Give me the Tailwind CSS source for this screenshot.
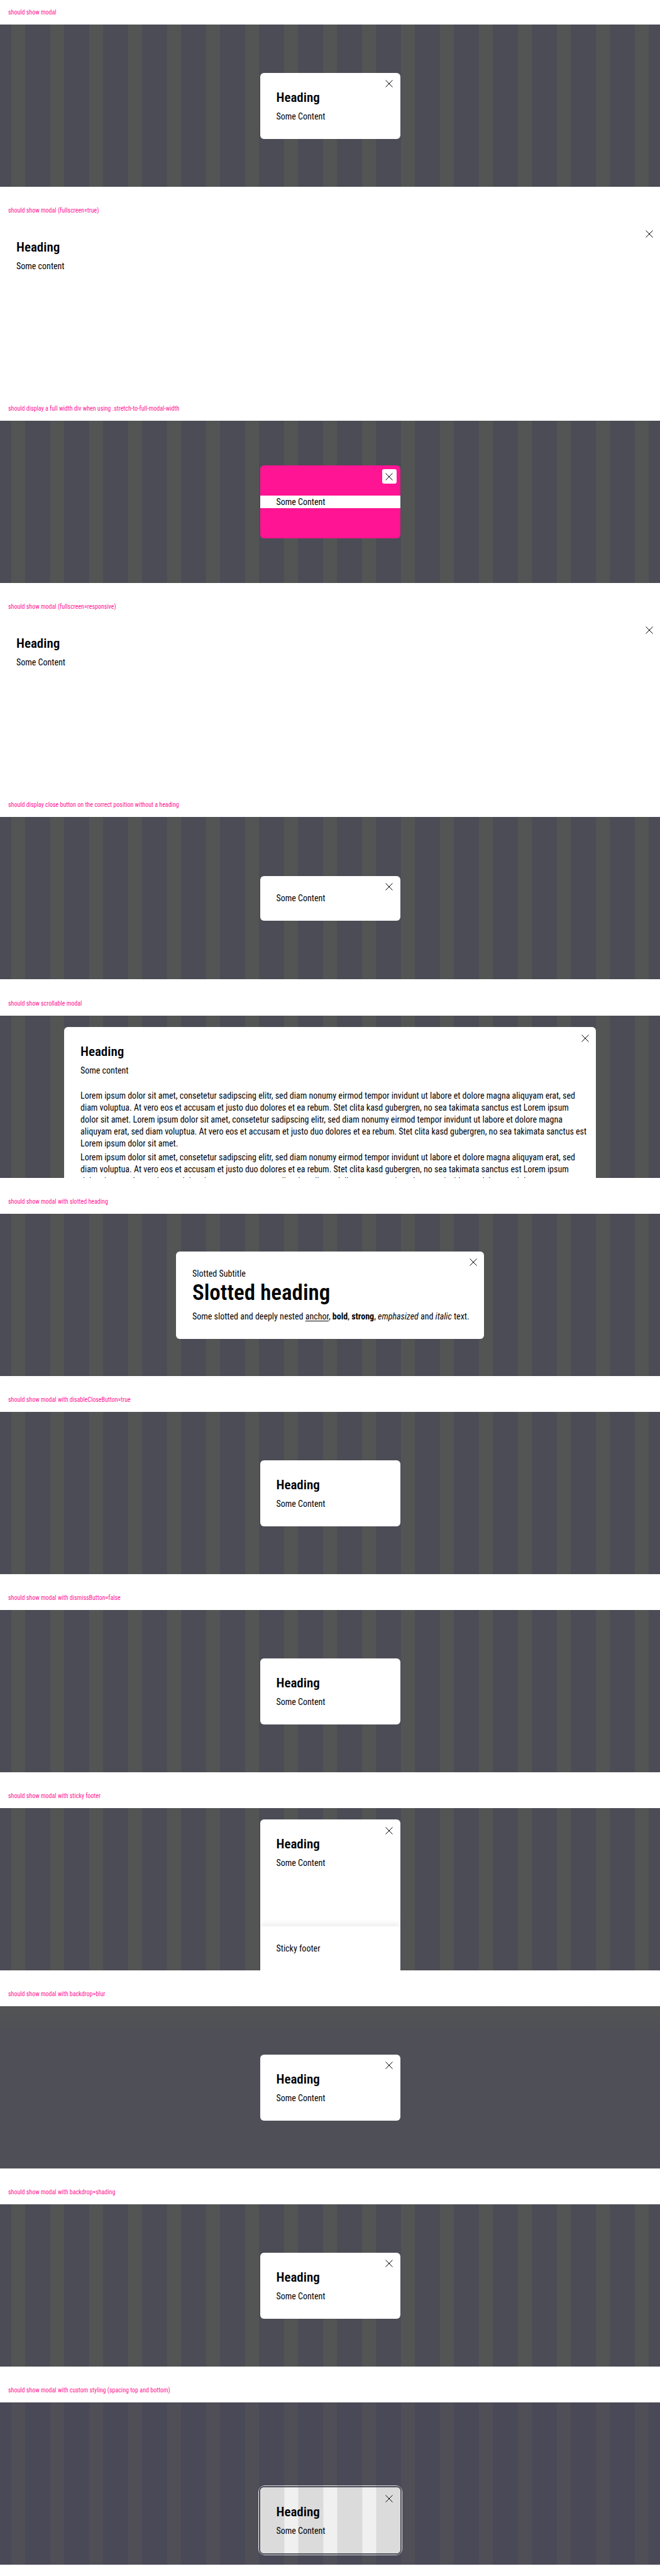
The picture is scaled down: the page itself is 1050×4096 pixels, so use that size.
<!DOCTYPE html>
<html lang="en">
<head>
<meta charset="utf-8">
<meta name="viewport" content="width=device-width, initial-scale=1">
<title>Modal overview</title>
<script src="https://cdn.jsdelivr.net/npm/@tailwindcss/browser@4"></script>
</head>
<body class="bg-white text-sm leading-[19px] text-[#010205] font-['Roboto_Condensed',Roboto,sans-serif]">
<svg class="hidden" aria-hidden="true">
  <symbol id="close" viewBox="0 0 12 12"><path d="M.5.5l11 11M11.5.5l-11 11" fill="none" stroke="currentColor" stroke-width="1"/></symbol>
</svg>

<main>
<section class="pb-[18px]">
  <h2 class="px-[13px] text-[10px] leading-[39px] text-[#ff1493]">should show modal</h2>
  <div class="flex h-[258px] items-center justify-center bg-[linear-gradient(90deg,#4c4c56_20px,#535554_20px,#535554_42px,#4c4c56_42px)] bg-size-[62px_100%] bg-center">
    <div role="dialog" class="relative w-[223px] rounded-md bg-white p-[26px]">
      <button type="button" aria-label="Dismiss modal" class="absolute top-1.5 right-1.5 grid size-[23px] place-items-center rounded-[3px] bg-white"><svg class="size-3"><use href="#close"/></svg></button>
      <h3 class="text-[21px] leading-[26px] font-semibold">Heading</h3>
      <p class="mt-2">Some Content</p>
    </div>
  </div>
</section>

<section class="pb-[18px]">
  <h2 class="px-[13px] text-[10px] leading-[39px] text-[#ff1493]">should show modal (fullscreen=true)</h2>
  <div role="dialog" class="relative h-[258px] bg-white p-[26px]">
    <button type="button" aria-label="Dismiss modal" class="absolute top-1.5 right-1.5 grid size-[23px] place-items-center rounded-[3px] bg-white"><svg class="size-3"><use href="#close"/></svg></button>
    <h3 class="text-[21px] leading-[26px] font-semibold">Heading</h3>
    <p class="mt-2">Some content</p>
  </div>
</section>

<section class="pb-[18px]">
  <h2 class="px-[13px] text-[10px] leading-[39px] text-[#ff1493]">should display a full width div when using .stretch-to-full-modal-width</h2>
  <div class="flex h-[258px] items-center justify-center bg-[linear-gradient(90deg,#4c4c56_20px,#535554_20px,#535554_42px,#4c4c56_42px)] bg-size-[62px_100%] bg-center">
    <div role="dialog" class="relative w-[223px] rounded-md bg-[#ff1493] py-12">
      <button type="button" aria-label="Dismiss modal" class="absolute top-1.5 right-1.5 grid size-[23px] place-items-center rounded-[3px] bg-white"><svg class="size-3"><use href="#close"/></svg></button>
      <p class="bg-white px-[26px] leading-5">Some Content</p>
    </div>
  </div>
</section>

<section class="pb-[18px]">
  <h2 class="px-[13px] text-[10px] leading-[39px] text-[#ff1493]">should show modal (fullscreen=responsive)</h2>
  <div role="dialog" class="relative h-[258px] bg-white p-[26px]">
    <button type="button" aria-label="Dismiss modal" class="absolute top-1.5 right-1.5 grid size-[23px] place-items-center rounded-[3px] bg-white"><svg class="size-3"><use href="#close"/></svg></button>
    <h3 class="text-[21px] leading-[26px] font-semibold">Heading</h3>
    <p class="mt-2">Some Content</p>
  </div>
</section>

<section class="pb-[19px]">
  <h2 class="px-[13px] text-[10px] leading-[39px] text-[#ff1493]">should display close button on the correct position without a heading</h2>
  <div class="flex h-[258px] items-center justify-center bg-[linear-gradient(90deg,#4c4c56_20px,#535554_20px,#535554_42px,#4c4c56_42px)] bg-size-[62px_100%] bg-center">
    <div role="dialog" class="relative w-[223px] rounded-md bg-white p-[26px]">
      <button type="button" aria-label="Dismiss modal" class="absolute top-1.5 right-1.5 grid size-[23px] place-items-center rounded-[3px] bg-white"><svg class="size-3"><use href="#close"/></svg></button>
      <p>Some Content</p>
    </div>
  </div>
</section>

<section class="pb-[18px]">
  <h2 class="px-[13px] text-[10px] leading-[39px] text-[#ff1493]">should show scrollable modal</h2>
  <div class="h-[258px] overflow-hidden bg-[linear-gradient(90deg,#4c4c56_20px,#535554_20px,#535554_42px,#4c4c56_42px)] bg-size-[62px_100%] bg-center px-[102px] pt-[18px]">
    <div role="dialog" class="relative rounded-t-md bg-white p-[26px]">
      <button type="button" aria-label="Dismiss modal" class="absolute top-1.5 right-1.5 grid size-[23px] place-items-center rounded-[3px] bg-white"><svg class="size-3"><use href="#close"/></svg></button>
      <h3 class="text-[21px] leading-[26px] font-semibold">Heading</h3>
      <p class="mt-2">Some content</p>
      <p class="mt-[21px] whitespace-nowrap">Lorem ipsum dolor sit amet, consetetur sadipscing elitr, sed diam nonumy eirmod tempor invidunt ut labore et dolore magna aliquyam erat, sed<br>
      diam voluptua. At vero eos et accusam et justo duo dolores et ea rebum. Stet clita kasd gubergren, no sea takimata sanctus est Lorem ipsum<br>
      dolor sit amet. Lorem ipsum dolor sit amet, consetetur sadipscing elitr, sed diam nonumy eirmod tempor invidunt ut labore et dolore magna<br>
      aliquyam erat, sed diam voluptua. At vero eos et accusam et justo duo dolores et ea rebum. Stet clita kasd gubergren, no sea takimata sanctus est<br>
      Lorem ipsum dolor sit amet.</p>
      <p class="mt-[3px] whitespace-nowrap">Lorem ipsum dolor sit amet, consetetur sadipscing elitr, sed diam nonumy eirmod tempor invidunt ut labore et dolore magna aliquyam erat, sed<br>
      diam voluptua. At vero eos et accusam et justo duo dolores et ea rebum. Stet clita kasd gubergren, no sea takimata sanctus est Lorem ipsum<br>
      dolor sit amet. Lorem ipsum dolor sit amet, consetetur sadipscing elitr, sed diam nonumy eirmod tempor invidunt ut labore et dolore magna</p>
    </div>
  </div>
</section>

<section class="pb-[18px]">
  <h2 class="px-[13px] text-[10px] leading-[39px] text-[#ff1493]">should show modal with slotted heading</h2>
  <div class="flex h-[258px] items-center justify-center bg-[linear-gradient(90deg,#4c4c56_20px,#535554_20px,#535554_42px,#4c4c56_42px)] bg-size-[62px_100%] bg-center">
    <div role="dialog" class="relative w-[490px] rounded-md bg-white p-[26px]">
      <button type="button" aria-label="Dismiss modal" class="absolute top-1.5 right-1.5 grid size-[23px] place-items-center rounded-[3px] bg-white"><svg class="size-3"><use href="#close"/></svg></button>
      <p>Slotted Subtitle</p>
      <h3 class="text-[35px] leading-[42px] font-semibold">Slotted heading</h3>
      <p class="mt-[7px] whitespace-nowrap">Some slotted and deeply nested <a href="#" class="underline underline-offset-2">anchor</a>, <b>bold</b>, <strong>strong</strong>, <em class="italic">emphasized</em> and <i class="italic">italic</i> text.</p>
    </div>
  </div>
</section>

<section class="pb-[18px]">
  <h2 class="px-[13px] text-[10px] leading-[39px] text-[#ff1493]">should show modal with disableCloseButton=true</h2>
  <div class="flex h-[258px] items-center justify-center bg-[linear-gradient(90deg,#4c4c56_20px,#535554_20px,#535554_42px,#4c4c56_42px)] bg-size-[62px_100%] bg-center">
    <div role="dialog" class="w-[223px] rounded-md bg-white p-[26px]">
      <h3 class="text-[21px] leading-[26px] font-semibold">Heading</h3>
      <p class="mt-2">Some Content</p>
    </div>
  </div>
</section>

<section class="pb-[18px]">
  <h2 class="px-[13px] text-[10px] leading-[39px] text-[#ff1493]">should show modal with dismissButton=false</h2>
  <div class="flex h-[258px] items-center justify-center bg-[linear-gradient(90deg,#4c4c56_20px,#535554_20px,#535554_42px,#4c4c56_42px)] bg-size-[62px_100%] bg-center">
    <div role="dialog" class="w-[223px] rounded-md bg-white p-[26px]">
      <h3 class="text-[21px] leading-[26px] font-semibold">Heading</h3>
      <p class="mt-2">Some Content</p>
    </div>
  </div>
</section>

<section class="pb-[18px]">
  <h2 class="px-[13px] text-[10px] leading-[39px] text-[#ff1493]">should show modal with sticky footer</h2>
  <div class="flex h-[258px] justify-center overflow-hidden bg-[linear-gradient(90deg,#4c4c56_20px,#535554_20px,#535554_42px,#4c4c56_42px)] bg-size-[62px_100%] bg-center pt-[18px]">
    <div role="dialog" class="relative flex w-[223px] flex-col overflow-hidden rounded-t-md bg-white">
      <button type="button" aria-label="Dismiss modal" class="absolute top-1.5 right-1.5 grid size-[23px] place-items-center rounded-[3px] bg-white"><svg class="size-3"><use href="#close"/></svg></button>
      <div class="grow px-[26px] pt-[26px]">
        <h3 class="text-[21px] leading-[26px] font-semibold">Heading</h3>
        <p class="mt-2">Some Content</p>
      </div>
      <footer class="bg-white px-[26px] pt-[26px] pb-[25px] shadow-[0_-4px_8px_rgba(204,204,204,0.35)]">Sticky footer</footer>
    </div>
  </div>
</section>

<section class="pb-[18px]">
  <h2 class="px-[13px] text-[10px] leading-[39px] text-[#ff1493]">should show modal with backdrop=blur</h2>
  <div class="flex h-[258px] items-center justify-center bg-[linear-gradient(#525455,#505155_12%,#4f4f58_14%)]">
    <div role="dialog" class="relative w-[223px] rounded-md bg-white p-[26px]">
      <button type="button" aria-label="Dismiss modal" class="absolute top-1.5 right-1.5 grid size-[23px] place-items-center rounded-[3px] bg-white"><svg class="size-3"><use href="#close"/></svg></button>
      <h3 class="text-[21px] leading-[26px] font-semibold">Heading</h3>
      <p class="mt-2">Some Content</p>
    </div>
  </div>
</section>

<section class="pb-[18px]">
  <h2 class="px-[13px] text-[10px] leading-[39px] text-[#ff1493]">should show modal with backdrop=shading</h2>
  <div class="flex h-[258px] items-center justify-center bg-[linear-gradient(90deg,#4c4c56_20px,#535554_20px,#535554_42px,#4c4c56_42px)] bg-size-[62px_100%] bg-center">
    <div role="dialog" class="relative w-[223px] rounded-md bg-white p-[26px]">
      <button type="button" aria-label="Dismiss modal" class="absolute top-1.5 right-1.5 grid size-[23px] place-items-center rounded-[3px] bg-white"><svg class="size-3"><use href="#close"/></svg></button>
      <h3 class="text-[21px] leading-[26px] font-semibold">Heading</h3>
      <p class="mt-2">Some Content</p>
    </div>
  </div>
</section>

<section class="pb-[18px]">
  <h2 class="px-[13px] text-[10px] leading-[39px] text-[#ff1493]">should show modal with custom styling (spacing top and bottom)</h2>
  <div class="flex h-[258px] items-end justify-center bg-[linear-gradient(90deg,#494958_20px,#504f57_20px,#504f57_42px,#494958_42px)] bg-size-[62px_100%] bg-center pb-[15px]">
    <div class="rounded-[10px] bg-[linear-gradient(90deg,#dcdcdf_20px,#f0f0f0_20px,#f0f0f0_42px,#dcdcdf_42px)] bg-size-[62px_100%] bg-center p-[3px]">
      <div role="dialog" class="relative w-[223px] rounded-md bg-[linear-gradient(90deg,#dbdbdb_20px,#f0f0f0_20px,#f0f0f0_42px,#dbdbdb_42px)] bg-size-[62px_100%] bg-center p-[26px] ring-2 ring-[#4b4b58]">
        <button type="button" aria-label="Dismiss modal" class="absolute top-1.5 right-1.5 grid size-[23px] place-items-center"><svg class="size-3"><use href="#close"/></svg></button>
        <h3 class="text-[21px] leading-[26px] font-semibold">Heading</h3>
        <p class="mt-2">Some Content</p>
      </div>
    </div>
  </div>
</section>
</main>
</body>
</html>
